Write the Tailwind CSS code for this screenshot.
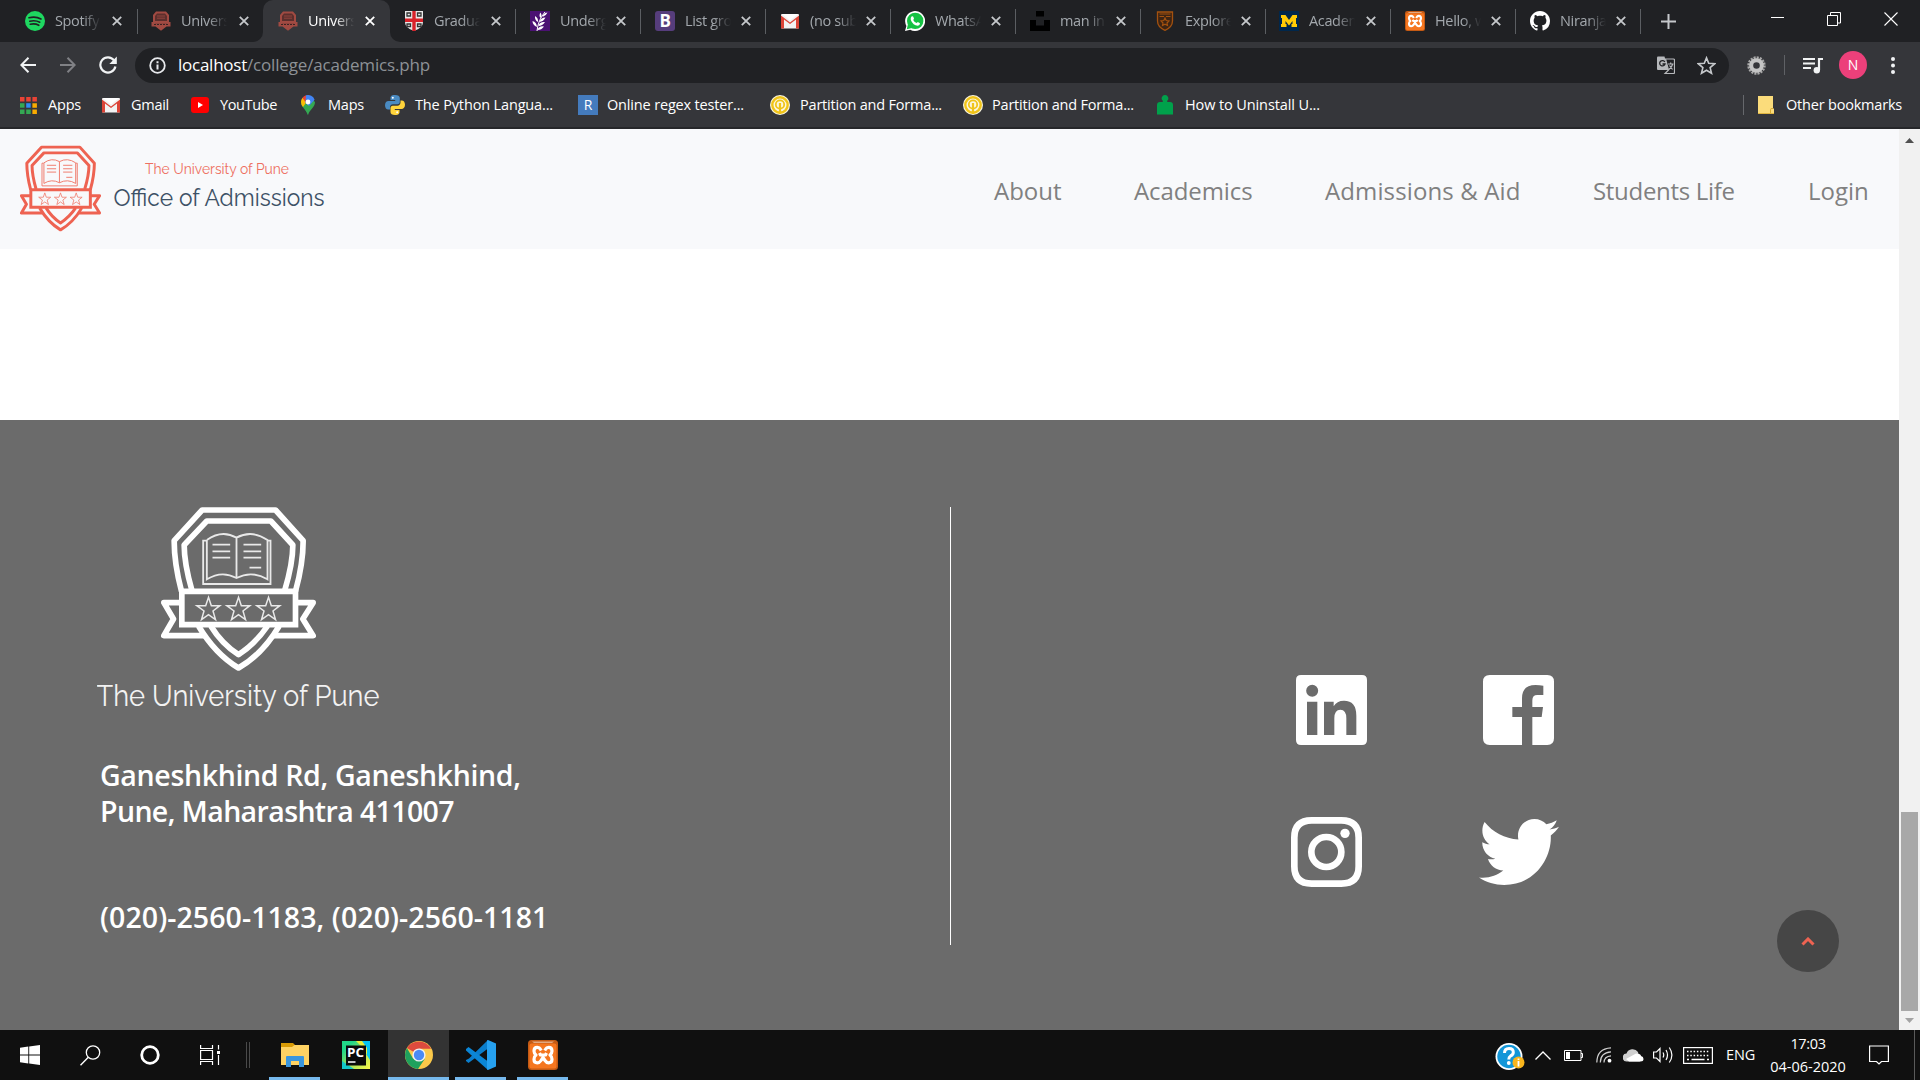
<!DOCTYPE html>
<html lang="en">
<head>
<meta charset="utf-8">
<title>University of Pune</title>
<script src="https://cdn.jsdelivr.net/npm/@tailwindcss/browser@4"></script>
</head>
<body class="w-[1920px] h-[1080px] overflow-hidden bg-white font-['Open_Sans','Noto_Sans',sans-serif] flex flex-col">

<svg class="hidden">
  <symbol id="crest" viewBox="243 51 464 492">
    <g fill="none" stroke="currentColor" stroke-width="17" stroke-linejoin="round">
      <path d="M304 304Q282 220 282 152L366 60H586L669 152Q669 220 646 304"/>
      <path d="M335 300Q312 220 312 165L380 93H572L638 165Q638 220 614 300"/>
      <path d="M305 304H646V404H305Z" stroke-linejoin="miter"/>
      <path d="M300 338H251L280 387L251 437H372M650 338H699L668 387L699 437H580"/>
      <path d="M355 408Q405 492 475 534Q548 492 597 408M392 408Q425 462 475 494Q525 462 562 408"/>
    </g>
    <g fill="none" stroke="currentColor" stroke-width="5.500" opacity=".85">
      <path d="M380 150V268Q425 240 469 264Q515 240 562 268V150Q515 118 469 143Q425 118 380 150M469 143V264M378 152H369V282H571V152H564"/>
      <path d="M397 164H450M397 184H450M397 203H450M490 164H543M490 184H543M490 203H543M508 233H543"/>
    </g>
    <g fill="none" stroke="currentColor" stroke-width="4.500" opacity=".85">
      <path id="st" d="M385 322L393.500 347H419L398.500 363L406 389L385 374L364 389L371.500 363L350 347H376.500Z"/>
      <use href="#st" x="90"/><use href="#st" x="180"/>
    </g>
  </symbol>
  <symbol id="tabcrest" viewBox="0 0 20 20">
    <path d="M5 .5H15L18 4V11H19.500V15.500H15.500L10 19.800L4.500 15.500H.5V11H2V4Z" fill="#a14a42"/>
    <path d="M6 2.500H14L16 5V10H4V5Z" fill="#5c2f2d"/><path d="M6 5H14M6 7.200H14M4 12.500H16" stroke="#91443d"/><path d="M3 13.500H17" stroke="#3a2424" stroke-width="1.200" stroke-dasharray="2 1"/>
  </symbol>
  <symbol id="x" viewBox="0 0 10 10"><path d="M.8.8L9.200 9.200M9.200.8L.8 9.200" stroke="currentColor" stroke-width="1.800"/></symbol>
  <symbol id="gmail" viewBox="0 0 20 16"><rect x="1" y="1" width="18" height="14.500" rx="1" fill="#f2f2f2"/><path d="M1 15.500V2.500L10 9.500L19 2.500V15.500H16V6.500L10 11L4 6.500V15.500Z" fill="#dc4437"/><path d="M2 1H18L10 7.500Z" fill="#fff"/></symbol>
  <symbol id="xampp" viewBox="0 0 30 30"><rect width="30" height="30" rx="3.500" fill="#c45a14"/><rect x="1.500" y="3.500" width="27" height="25" rx="2" fill="#f5761f"/><path d="M4 1.500H26L24 3H6Z" fill="#e2a880"/><path d="M12.300 9Q11.500 7.300 9.300 7.300Q6 7.300 6 11Q6 13.500 8 15Q6 16.500 6 19.200Q6 22.800 9.300 22.800Q11.500 22.800 13 20.500L15 17.500L17 20.500Q18.500 22.800 20.700 22.800Q24 22.800 24 19.200Q24 16.500 22 15Q24 13.500 24 11Q24 7.300 20.700 7.300Q18.500 7.300 17.700 9M11.500 13L12.500 15H17.500L18.500 13M17.700 9L16.800 10.500M12.300 9L13.200 10.500" fill="none" stroke="#fff" stroke-width="3.200" stroke-linejoin="round"/></symbol>
  <symbol id="partition" viewBox="0 0 20 20"><circle cx="10" cy="10" r="10" fill="#fbf6dd"/><circle cx="10" cy="10" r="7.700" fill="none" stroke="#f0c419" stroke-width="2.400"/><circle cx="10" cy="9.500" r="4.200" fill="none" stroke="#f0c419" stroke-width="1.800"/><path d="M10 8V19" stroke="#f0c419" stroke-width="2.200"/></symbol>
</svg>

<!-- Tab strip -->
<div class="h-[42px] shrink-0 bg-[#202124] flex text-[14.5px] tracking-[-0.35px] text-[#a3a8ad]">
  <div class="flex w-[137px] pl-[25px] items-center border-r border-transparent">
    <svg class="size-5 shrink-0" viewBox="0 0 20 20"><circle cx="10" cy="10" r="10" fill="#1ed760"/><path d="M4 6.800Q10.500 5 16 8M4.800 10.200Q10.300 8.800 14.800 11.200M5.300 13.300Q10 12.200 13.800 14.300" fill="none" stroke="#202124" stroke-width="1.600" stroke-linecap="round"/></svg>
    <span class="ml-[10px] w-[46px] overflow-hidden whitespace-nowrap mask-r-from-60%">Spotify</span>
    <svg class="size-[10px] ml-[11px] text-[#c5c8cb]"><use href="#x"/></svg>
  </div>
  <div class="flex w-[126px] pl-[14px] items-center relative">
    <i class="absolute left-0 top-[9px] w-px h-[25px] bg-[#5b5e62]"></i>
    <svg class="size-5 shrink-0"><use href="#tabcrest"/></svg>
    <span class="ml-[10px] w-[46px] overflow-hidden whitespace-nowrap mask-r-from-60%">Universi</span>
    <svg class="size-[10px] ml-[12px] text-[#c5c8cb]"><use href="#x"/></svg>
  </div>
  <div class="flex w-[127px] pl-[15px] items-center bg-[#35363a] rounded-t-[10px] text-white relative">
    <i class="absolute -left-[10px] bottom-0 size-[10px] bg-[#35363a]"><b class="block size-full bg-[#202124] rounded-br-[10px]"></b></i>
    <i class="absolute -right-[10px] bottom-0 size-[10px] bg-[#35363a]"><b class="block size-full bg-[#202124] rounded-bl-[10px]"></b></i>
    <svg class="size-5 shrink-0"><use href="#tabcrest"/></svg>
    <span class="ml-[10px] w-[46px] overflow-hidden whitespace-nowrap mask-r-from-60%">Universi</span>
    <svg class="size-[10px] ml-[11px]"><use href="#x"/></svg>
  </div>
  <div class="flex w-[125px] pl-[14px] items-center">
    <svg class="size-5 shrink-0" viewBox="0 0 20 20"><path d="M1 0H19V11Q19 17 10 20Q1 17 1 11Z" fill="#e9e9e9"/><path d="M3 2H6.500V5H3ZM13.500 2H17V5H13.500ZM3 13H6.500V15.500H3ZM13.500 13H17V15.500H13.500Z" fill="none" stroke="#333" stroke-width="1.300"/><path d="M8.300 0H11.700V20H8.300ZM1 7.500H19V11H1Z" fill="#d8222a"/></svg>
    <span class="ml-[10px] w-[46px] overflow-hidden whitespace-nowrap mask-r-from-60%">Graduat</span>
    <svg class="size-[10px] ml-[11px] text-[#c5c8cb]"><use href="#x"/></svg>
  </div>
  <div class="flex w-[125px] pl-[15px] items-center relative">
    <i class="absolute left-0 top-[9px] w-px h-[25px] bg-[#5b5e62]"></i>
    <svg class="size-5 shrink-0" viewBox="0 0 20 20"><rect width="20" height="20" fill="#4b1173"/><path d="M7 20Q8 9 15 1" fill="none" stroke="#fff" stroke-width="1"/><path d="M8 11Q4.500 9 5 5Q8.500 7 8 11M10.500 7Q8.500 4.500 10.500 1.500Q12.500 4.500 10.500 7M7 16Q2.500 14 2.500 10Q6.500 11 7 16M9.500 11Q13.500 10.500 15.500 6.500Q10.500 6.500 9.500 11M8.300 15Q12.500 15 15 11Q9.500 10.500 8.300 15M7.500 19Q11.500 19 14 15.500Q9 14.500 7.500 19M12.500 6Q16 5 17.500 1.500Q13 2 12.500 6" fill="#fff"/></svg>
    <span class="ml-[10px] w-[46px] overflow-hidden whitespace-nowrap mask-r-from-60%">Undergr</span>
    <svg class="size-[10px] ml-[10px] text-[#c5c8cb]"><use href="#x"/></svg>
  </div>
  <div class="flex w-[125px] pl-[15px] items-center relative">
    <i class="absolute left-0 top-[9px] w-px h-[25px] bg-[#5b5e62]"></i>
    <span class="size-5 shrink-0 rounded-[3px] bg-[#563d7c] text-white font-bold text-[17px] leading-5 text-center">B</span>
    <span class="ml-[10px] w-[46px] overflow-hidden whitespace-nowrap mask-r-from-60%">List grou</span>
    <svg class="size-[10px] ml-[10px] text-[#c5c8cb]"><use href="#x"/></svg>
  </div>
  <div class="flex w-[125px] pl-[15px] items-center relative">
    <i class="absolute left-0 top-[9px] w-px h-[25px] bg-[#5b5e62]"></i>
    <svg class="w-5 h-4 shrink-0"><use href="#gmail"/></svg>
    <span class="ml-[10px] w-[46px] overflow-hidden whitespace-nowrap mask-r-from-60%">(no subj</span>
    <svg class="size-[10px] ml-[10px] text-[#c5c8cb]"><use href="#x"/></svg>
  </div>
  <div class="flex w-[125px] pl-[15px] items-center relative">
    <i class="absolute left-0 top-[9px] w-px h-[25px] bg-[#5b5e62]"></i>
    <svg class="size-5 shrink-0" viewBox="0 0 20 20"><path d="M0 20L1.400 14.900A10 10 0 1 1 5.200 18.700Z" fill="#fff"/><circle cx="10.200" cy="9.900" r="8.200" fill="#15c243"/><path d="M1.800 18.200L3 13L7 17Z" fill="#15c243"/><path d="M6.500 5.500Q8 4.500 8.500 6.200L9 7.800L8.200 9Q9.500 11.300 11.700 12L12.800 11L15 12.200Q15 14.500 12.800 14.700Q8 14.500 5.800 9Q5.300 6.800 6.500 5.500Z" fill="#fff"/></svg>
    <span class="ml-[10px] w-[46px] overflow-hidden whitespace-nowrap mask-r-from-60%">WhatsAp</span>
    <svg class="size-[10px] ml-[10px] text-[#c5c8cb]"><use href="#x"/></svg>
  </div>
  <div class="flex w-[125px] pl-[15px] items-center relative">
    <i class="absolute left-0 top-[9px] w-px h-[25px] bg-[#5b5e62]"></i>
    <svg class="size-5 shrink-0" viewBox="0 0 20 20"><path d="M6 0H14V5.600H6ZM0 9H6V14.500H14V9H20V20H0Z" fill="#000"/></svg>
    <span class="ml-[10px] w-[46px] overflow-hidden whitespace-nowrap mask-r-from-60%">man in b</span>
    <svg class="size-[10px] ml-[10px] text-[#c5c8cb]"><use href="#x"/></svg>
  </div>
  <div class="flex w-[125px] pl-[15px] items-center relative">
    <i class="absolute left-0 top-[9px] w-px h-[25px] bg-[#5b5e62]"></i>
    <svg class="size-5 shrink-0" viewBox="0 0 20 20"><path d="M2.500 1H17.500V10Q17.500 16 10 19.300Q2.500 16 2.500 10Z" fill="#3d2413" stroke="#a3510f" stroke-width="1.300"/><path d="M4.500 3H15.500M4.500 5.500H9M11 5.500H15.500M10 7L11.200 9.500L14 10L12 12L12.500 14.500L10 13.200L7.500 14.500L8 12L6 10L8.800 9.500Z" fill="none" stroke="#a3510f" stroke-width="1.200"/></svg>
    <span class="ml-[10px] w-[46px] overflow-hidden whitespace-nowrap mask-r-from-60%">Explore</span>
    <svg class="size-[10px] ml-[10px] text-[#c5c8cb]"><use href="#x"/></svg>
  </div>
  <div class="flex w-[125px] pl-[14px] items-center relative">
    <i class="absolute left-0 top-[9px] w-px h-[25px] bg-[#5b5e62]"></i>
    <svg class="size-5 shrink-0" viewBox="0 0 20 20"><rect width="20" height="20" fill="#00274c"/><path d="M2 4H6.500L10 9L13.500 4H18V7H17V13H18V16H12.500V13H13.500V10L10 14.500L6.500 10V13H7.500V16H2V13H3V7H2Z" fill="#ffcb05"/></svg>
    <span class="ml-[10px] w-[46px] overflow-hidden whitespace-nowrap mask-r-from-60%">Academi</span>
    <svg class="size-[10px] ml-[11px] text-[#c5c8cb]"><use href="#x"/></svg>
  </div>
  <div class="flex w-[125px] pl-[15px] items-center relative">
    <i class="absolute left-0 top-[9px] w-px h-[25px] bg-[#5b5e62]"></i>
    <svg class="size-5 shrink-0"><use href="#xampp"/></svg>
    <span class="ml-[10px] w-[46px] overflow-hidden whitespace-nowrap mask-r-from-60%">Hello, wo</span>
    <svg class="size-[10px] ml-[10px] text-[#c5c8cb]"><use href="#x"/></svg>
  </div>
  <div class="flex w-[125px] pl-[15px] items-center relative">
    <i class="absolute left-0 top-[9px] w-px h-[25px] bg-[#5b5e62]"></i>
    <svg class="size-5 shrink-0" viewBox="0 0 16 16"><path fill="#fff" d="M8 0C3.580 0 0 3.580 0 8c0 3.540 2.290 6.530 5.470 7.590.4.070.55-.17.55-.38 0-.19-.01-.82-.01-1.490-2.010.37-2.530-.49-2.690-.94-.09-.23-.48-.94-.82-1.130-.28-.15-.68-.52-.01-.53.63-.01 1.080.58 1.230.82.72 1.210 1.870.87 2.330.66.07-.52.28-.87.51-1.070-1.780-.2-3.640-.89-3.640-3.950 0-.87.31-1.590.82-2.150-.08-.2-.36-1.020.08-2.120 0 0 .67-.21 2.200.82.64-.18 1.320-.27 2-.27s1.360.09 2 .27c1.530-1.040 2.200-.82 2.200-.82.44 1.100.16 1.920.08 2.120.51.56.82 1.270.82 2.150 0 3.070-1.870 3.750-3.650 3.950.29.25.54.73.54 1.480 0 1.070-.01 1.930-.01 2.200 0 .21.15.46.55.38A8.010 8.010 0 0 0 16 8c0-4.420-3.580-8-8-8z"/></svg>
    <span class="ml-[10px] w-[46px] overflow-hidden whitespace-nowrap mask-r-from-60%">Niranjan</span>
    <svg class="size-[10px] ml-[10px] text-[#c5c8cb]"><use href="#x"/></svg>
  </div>
  <div class="flex flex-1 pl-[21px] items-center relative">
    <i class="absolute left-0 top-[9px] w-px h-[25px] bg-[#5b5e62]"></i>
    <svg class="size-[15px]" viewBox="0 0 15 15"><path d="M7.500 0V15M0 7.500H15" stroke="#c5c8cb" stroke-width="2"/></svg>
    <svg class="w-[13px] h-[13px] ml-[95px] mb-[7px]" viewBox="0 0 13 13"><path d="M0 6.500H13" stroke="#fff"/></svg>
    <svg class="w-[14px] h-[14px] ml-[43px] mb-[5px]" viewBox="0 0 14 14"><path d="M.5 3.500H10.500V13.500H.5ZM3.500 3V.5H13.500V11H11" stroke="#fff" fill="none"/></svg>
    <svg class="w-[14px] h-[14px] ml-[43px] mb-[5px]" viewBox="0 0 14 14"><path d="M.5.5L13.500 13.500M13.500.5L.5 13.500" stroke="#fff" stroke-width="1.100"/></svg>
  </div>
</div>

<!-- Address bar -->
<div class="h-[46px] shrink-0 bg-[#35363a] flex items-center">
  <svg class="size-4 ml-[20px]" viewBox="0 0 16 16"><path d="M16 8H1.500M8.500 .8L1.300 8L8.500 15.200" fill="none" stroke="#f1f3f4" stroke-width="2"/></svg>
  <svg class="size-4 ml-[24px]" viewBox="0 0 16 16"><path d="M0 8H14.500M7.500 .8L14.700 8L7.500 15.200" fill="none" stroke="#808185" stroke-width="2"/></svg>
  <svg class="size-[18px] ml-[23px]" viewBox="0 0 18 18"><path d="M15 4.300A7.600 7.600 0 1 0 16.400 10.500" fill="none" stroke="#f1f3f4" stroke-width="2.200"/><path d="M17.800 .5V8H10.300Z" fill="#f1f3f4"/></svg>
  <div class="ml-[18px] w-[1594px] h-[35px] rounded-full bg-[#202124] flex items-center text-[17px]">
    <svg class="size-[17px] ml-[14px]" viewBox="0 0 17 17"><circle cx="8.500" cy="8.500" r="7.300" fill="none" stroke="#e8eaed" stroke-width="1.800"/><path d="M8.500 7.500V12.500M8.500 4.300V6.200" stroke="#e8eaed" stroke-width="2"/></svg>
    <span class="ml-[12px] whitespace-nowrap text-white tracking-[-0.247px]">localhost</span><span class="whitespace-nowrap text-[#8d9196] tracking-[-0.168px]">/college/academics.php</span>
    <svg class="w-[18px] h-[18px] ml-auto mr-[22px]" viewBox="0 0 18 18"><path d="M0 1.500Q0 .5 1 .5H7.500L11.500 14H1Q0 14 0 13Z" fill="#b6b8bb"/><path d="M8.500 3H16.500Q17.500 3 17.500 4V16.500Q17.500 17.500 16.500 17.500H8L11.500 14Z" fill="none" stroke="#b6b8bb" stroke-width="1.200"/><path d="M7.800 6A2.700 2.700 0 1 0 8 8H5.500" fill="none" stroke="#202124" stroke-width="1.300"/><path d="M11 8H16.500M13.700 6.500V8M15.700 8Q15 11 12 13.500M12.500 9.500L15.500 13.500" fill="none" stroke="#b6b8bb" stroke-width="1.200"/></svg>
    <svg class="size-[19px] mr-[13px]" viewBox="0 0 20 20"><path d="M10 2L12.300 7.700L18.500 8.200L13.800 12.200L15.300 18.200L10 15L4.700 18.200L6.200 12.200L1.500 8.200L7.700 7.700Z" fill="none" stroke="#c5c8cb" stroke-width="1.700"/></svg>
  </div>
  <svg class="size-[19px] ml-[18px]" viewBox="0 0 19 19"><circle cx="9.500" cy="9.500" r="7.700" fill="none" stroke="#a9a9a9" stroke-width="3" stroke-dasharray="2 1.020"/><circle cx="9.500" cy="9.500" r="5.300" fill="none" stroke="#c4c4c4" stroke-width="4"/></svg>
  <i class="w-px h-5 bg-[#5f6165] ml-[18px]"></i>
  <svg class="w-5 h-[17px] ml-[18px]" viewBox="0 0 20 17"><path d="M0 2H12M0 6.500H12M0 11H8" stroke="#f1f3f4" stroke-width="2"/><path d="M16 13V2H20" fill="none" stroke="#f1f3f4" stroke-width="2.200"/><circle cx="13.800" cy="13.300" r="3.200" fill="#f1f3f4"/></svg>
  <span class="ml-[16px] size-[28px] rounded-full bg-[#ec407a] text-white text-[14px] leading-7 text-center">N</span>
  <svg class="w-[4px] h-[17px] ml-[24px]" viewBox="0 0 4 17"><circle cx="2" cy="2" r="2" fill="#f1f3f4"/><circle cx="2" cy="8.500" r="2" fill="#f1f3f4"/><circle cx="2" cy="15" r="2" fill="#f1f3f4"/></svg>
</div>

<!-- Bookmarks bar -->
<div class="h-[41px] shrink-0 bg-[#35363a] border-b-2 border-[#26272a] flex items-center pb-[5px] text-[14.5px] text-white whitespace-nowrap">
  <svg class="w-[17px] h-[17px] ml-[20px]" viewBox="0 0 17 17"><path d="M0 0h4.500v4.500H0zM6.200 0h4.500v4.500H6.200zM12.400 0h4.500v4.500h-4.500z" fill="#ea4335"/><path d="M0 6.200h4.500v4.500H0z" fill="#34a853"/><path d="M6.200 6.200h4.500v4.500H6.200z" fill="#2f8df5"/><path d="M12.400 6.200h4.500v4.500h-4.500zM12.400 12.400h4.500v4.500h-4.500z" fill="#f9ab00"/><path d="M0 12.400h4.500v4.500H0zM6.200 12.400h4.500v4.500H6.200z" fill="#34a853"/></svg>
  <span class="ml-[11px] w-[33px] tracking-[-0.2px]">Apps</span>
  <svg class="w-5 h-4 ml-[20px]"><use href="#gmail"/></svg>
  <span class="ml-[10px] w-[38px] tracking-[-0.27px]">Gmail</span>
  <svg class="w-[18px] h-[16px] ml-[22px]" viewBox="0 0 18 16"><rect width="18" height="16" rx="3" fill="#f00"/><path d="M7 5L12 8L7 11Z" fill="#fff"/></svg>
  <span class="ml-[11px] w-[57px] tracking-[-0.37px]">YouTube</span>
  <svg class="w-[14px] h-5 ml-[24px]" viewBox="0 0 14 20"><path d="M7 20C6 15 0 12.500 0 7L4 3L10 10C8.500 13 7.500 15 7 20Z" fill="#34a853"/><path d="M14 7C14 12.500 8 15 7 20L4.500 15L11 4Z" fill="#34a853"/><path d="M0 7A7 7 0 0 1 1.500 2.700L6 6.500L2 12Q0 9.500 0 7" fill="#fbbc04"/><path d="M1.500 2.700A7 7 0 0 1 5 .3L8 4L5 8Z" fill="#ea4335"/><path d="M5 .3A7 7 0 0 1 13.600 4.700L8 11L4.500 8Z" fill="#4285f4"/><circle cx="7" cy="7" r="2.400" fill="#fff"/></svg>
  <span class="ml-[13px] w-[36px] tracking-[-0.22px]">Maps</span>
  <svg class="w-5 h-5 ml-[21px]" viewBox="0 0 20 20"><path d="M10 0C6 0 5.500 1.500 5.500 3V5H10.200V6H3.500C1.500 6 0 7.500 0 10.200C0 13 1.500 14.500 3.200 14.500H5V12C5 10.500 6.500 9.300 8 9.300H12.500C13.700 9.300 14.800 8.300 14.800 7V3C14.800 1 13 0 10 0Z" fill="#4a8bc2"/><path d="M10 20C14 20 14.500 18.500 14.500 17V15H9.800V14H16.500C18.500 14 20 12.500 20 9.800C20 7 18.500 5.500 16.800 5.500H15.500V7.500C15.500 9.500 14 10.700 12.500 10.700H7.700C6.300 10.700 5.500 11.700 5.500 13V17C5.500 19 7 20 10 20Z" fill="#ffd43b"/><circle cx="7.800" cy="2.700" r="1" fill="#fff"/><circle cx="12.200" cy="17.300" r="1" fill="#fff"/></svg>
  <span class="ml-[10px] w-[138px] tracking-[-0.15px]">The Python Langua...</span>
  <span class="ml-[25px] w-5 h-5 bg-[#447bbd] text-[14px] leading-5 text-center">R</span>
  <span class="ml-[9px] w-[137px] tracking-[-0.165px]">Online regex tester...</span>
  <svg class="size-5 ml-[26px]"><use href="#partition"/></svg>
  <span class="ml-[10px] w-[142px] tracking-[-0.2px]">Partition and Forma...</span>
  <svg class="size-5 ml-[21px]"><use href="#partition"/></svg>
  <span class="ml-[9px] w-[142px] tracking-[-0.2px]">Partition and Forma...</span>
  <svg class="w-4 h-5 ml-[23px]" viewBox="0 0 16 20"><path d="M8 0A3.300 3.300 0 0 1 10.200 5.800V7H13Q16 7 16 10V19.500H0V10Q0 7 3 7H5.800V5.800A3.300 3.300 0 0 1 8 0Z" fill="#00a14b"/></svg>
  <span class="ml-[12px] w-[135px] tracking-[-0.11px]">How to Uninstall U...</span>
  <i class="w-px h-5 bg-[#66686c] ml-auto"></i>
  <svg class="w-4 h-[18px] ml-[14px]" viewBox="0 0 16 18"><path d="M0 0H15V12.500H16V17.500H0Z" fill="#fbdc7b"/><path d="M12.500 17.500V13.500Q12.500 12.500 14 12.500H15" fill="none" stroke="#d8ab32"/><path d="M0 17.500H16" stroke="#e0b540"/></svg>
  <span class="ml-[12px] mr-[18px] w-[116px] tracking-[-0.2px]">Other bookmarks</span>
</div>

<!-- Viewport -->
<div class="flex h-[901px] shrink-0">
  <div class="w-[1899px] relative">
    <nav class="h-[120px] bg-[#f8f9fb] flex items-center">
      <svg class="w-[330px] h-[120px]" viewBox="0 0 330 120" font-family="Raleway, Lato, sans-serif">
        <svg x="20" y="16" width="81" height="87" color="#ee6352" preserveAspectRatio="none"><use href="#crest" width="81" height="87"/></svg>
        <text x="145" y="45" font-size="15.500" textLength="144" lengthAdjust="spacingAndGlyphs" fill="#ee6f60">The University of Pune</text>
        <text x="113.500" y="77" font-size="23.500" textLength="211" lengthAdjust="spacingAndGlyphs" fill="#3d5166">Office of Admissions</text>
      </svg>
      <div class="ml-auto flex text-[24px] leading-[36px] text-[#808080] pr-[30px] gap-[73px] pt-[3px] whitespace-nowrap">
        <span class="w-[67px]">About</span>
        <span class="w-[118px] tracking-[-0.1px]">Academics</span>
        <span class="w-[195px] tracking-[0.12px]">Admissions &amp; Aid</span>
        <span class="w-[142px] tracking-[-0.3px]">Students Life</span>
        <span class="w-[61px]">Login</span>
      </div>
    </nav>
    <div class="h-[171px] bg-white"></div>
    <footer class="h-[610px] bg-[#6b6b6b] flex pt-[87px] text-white">
      <div class="w-[950px] h-[438px] pl-[97px]">
        <svg class="w-[290px] h-[215px]" viewBox="0 0 290 215" font-family="Raleway, Lato, sans-serif">
          <use href="#crest" x="64" y="0" width="155" height="164"/>
          <text x="-.5" y="199" font-size="29" textLength="283" lengthAdjust="spacingAndGlyphs" fill="#f2f2f2">The University of Pune</text>
        </svg>
        <p class="mt-[35px] pl-[3px] text-[28.5px] leading-[36px] font-semibold whitespace-nowrap"><span class="tracking-[-0.34px]">Ganeshkhind Rd, Ganeshkhind,</span><br><span class="tracking-[-0.62px]">Pune, Maharashtra 411007</span></p>
        <p class="mt-[70px] pl-[3px] text-[28.5px] leading-[36px] font-semibold whitespace-nowrap tracking-[0.06px]">(020)-2560-1183, (020)-2560-1181</p>
      </div>
      <div class="w-px h-[438px] bg-white"></div>
      <div class="pl-[340px] pt-[168px] flex flex-col">
        <div class="flex pl-[5px] gap-[116px]">
          <svg class="w-[71px] h-[70px]" viewBox="0 0 213 210"><path fill="#fff" fill-rule="evenodd" d="M15 0H198Q213 0 213 15V195Q213 210 198 210H15Q0 210 0 195V15Q0 0 15 0ZM48.500 29.500A18 18 0 1 0 48.500 65.500A18 18 0 1 0 48.500 29.500ZM33 80V180H64V80ZM84 80V180H115V130Q115 104 133 104Q151 104 151 130V180H181V122Q181 77 144 77Q122 77 113 94V80Z"/></svg>
          <svg class="w-[71px] h-[70px]" viewBox="0 0 213 210"><path fill="#fff" d="M20 0H193Q213 0 213 20V190Q213 210 193 210H148V126H176L180 96H148V76Q148 60 163 60H181V32Q170 30 158 30Q117 30 117 70V96H88V126H117V210H20Q0 210 0 190V20Q0 0 20 0Z"/></svg>
        </div>
        <div class="flex pt-[72px] gap-[117px] items-center">
          <svg class="w-[71px] h-[70px]" viewBox="0 0 213 210"><g fill="none" stroke="#fff" stroke-width="20"><path d="M62 10H151Q203 10 203 62V148Q203 200 151 200H62Q10 200 10 148V62Q10 10 62 10Z"/><circle cx="106" cy="105" r="45"/></g><circle cx="162" cy="49" r="14" fill="#fff"/></svg>
          <svg class="w-[80px] h-[66px]" viewBox="0 48 512 416" preserveAspectRatio="none"><path fill="#fff" d="M459.370 151.716c.325 4.548.325 9.097.325 13.645 0 138.720-105.583 298.558-298.558 298.558-59.452 0-114.680-17.219-161.137-47.106 8.447.974 16.568 1.299 25.340 1.299 49.055 0 94.213-16.568 130.274-44.832-46.132-.975-84.792-31.188-98.112-72.772 6.498.974 12.995 1.624 19.818 1.624 9.421 0 18.843-1.300 27.614-3.573-48.081-9.747-84.143-51.980-84.143-102.985v-1.299c13.969 7.797 30.214 12.670 47.431 13.319-28.264-18.843-46.781-51.005-46.781-87.391 0-19.492 5.197-37.360 14.294-52.954 51.655 63.675 129.300 105.258 216.365 109.807-1.624-7.797-2.599-15.918-2.599-24.040 0-57.828 46.782-104.934 104.934-104.934 30.213 0 57.502 12.670 76.670 33.137 23.715-4.548 46.456-13.320 66.599-25.340-7.798 24.366-24.366 44.833-46.132 57.827 21.117-2.273 41.584-8.122 60.426-16.243-14.292 20.791-32.161 39.308-52.628 54.253z"/></svg>
        </div>
      </div>
    </footer>
    <button class="absolute left-[1777px] top-[781px] size-[62px] rounded-full bg-[#464646] grid place-items-center">
      <svg class="w-[14px] h-[9px]" viewBox="0 0 14 9"><path d="M1.500 7.500L7 2L12.500 7.500" fill="none" stroke="#ee6352" stroke-width="3"/></svg>
    </button>
  </div>
  <!-- Scrollbar -->
  <div class="w-[21px] bg-[#f1f1f1] flex flex-col items-center">
    <svg class="w-[9px] h-[5px] mt-[9px]" viewBox="0 0 9 5"><path d="M0 5L4.500 0L9 5Z" fill="#505050"/></svg>
    <div class="mt-[669px] w-[17px] h-[199px] bg-[#a8a8a8]"></div>
    <svg class="w-[9px] h-[5px] mt-[7px]" viewBox="0 0 9 5"><path d="M0 0L4.500 5L9 0Z" fill="#a3a3a3"/></svg>
  </div>
</div>

<!-- Taskbar -->
<div class="h-[50px] shrink-0 bg-[#101010] flex items-center text-white">
  <svg class="size-5 ml-[20px]" viewBox="0 0 20 20"><path d="M0 2.800L8.300 1.600V9.500H0ZM9.200 1.500L20 0V9.500H9.200ZM0 10.400H8.300V18.400L0 17.200ZM9.200 10.400H20V20L9.200 18.500Z" fill="#fff"/></svg>
  <svg class="w-[21px] h-[21px] ml-[40px]" viewBox="0 0 21 21"><circle cx="13" cy="7.500" r="6.700" fill="none" stroke="#fff" stroke-width="1.300"/><path d="M8.300 12.300L.5 20.300" stroke="#fff" stroke-width="1.400"/></svg>
  <svg class="size-5 ml-[39px]" viewBox="0 0 20 20"><circle cx="10" cy="10" r="8.300" fill="none" stroke="#fff" stroke-width="2.800"/></svg>
  <svg class="w-[21px] h-5 ml-[40px]" viewBox="0 0 21 20"><path d="M.6 0V3.500H12.500V0M.6 5.500H12.500V14.500H.6ZM.6 20V16.500H12.500V20M18.500 0V4.500M18.500 10V20" fill="none" stroke="#fff" stroke-width="1.200"/><path d="M17 6H20V9H17Z" fill="#fff"/></svg>
  <i class="w-px h-[26px] bg-[#4a4a4a] ml-[25px]"></i><i class="w-px h-[26px] bg-[#4a4a4a] ml-[2px]"></i>
  <div class="ml-[19px] w-[51px] h-full flex items-center justify-center pt-[2px] border-b-[3px] border-[#76b9ed]">
    <svg class="w-7 h-6" viewBox="0 0 28 24"><path d="M0 0H12L14 2H27V10H0Z" fill="#d99b05"/><path d="M0 4H11L13.500 2H28V22H0Z" fill="#ffd363"/><path d="M5 24V14Q5 13 6 13H22Q23 13 23 14V24H18V18H10V24Z" fill="#3a96dd"/></svg>
  </div>
  <div class="ml-[15px] w-[41px] h-full flex items-center justify-center">
    <svg class="w-7 h-7" viewBox="0 0 28 28"><defs><linearGradient id="pg" x1="0" y1="0" x2="1" y2="1"><stop offset=".2" stop-color="#21d789"/><stop offset=".55" stop-color="#9fe35a"/><stop offset="1" stop-color="#fcf84a"/></linearGradient></defs><rect width="28" height="28" fill="url(#pg)"/><path d="M15 0H28V19L21 8Z" fill="#07c3f2"/><path d="M14 0H20L25 7V14L20 6Z" fill="#e9f03c"/><path d="M0 20L12 28H0Z" fill="#12c6c9"/><rect x="4" y="4.500" width="20" height="20" fill="#0a0a0a"/><text x="5" y="15.500" font-size="12" font-weight="700" textLength="17" lengthAdjust="spacingAndGlyphs" fill="#fff">PC</text><path d="M6 21H13.500" stroke="#fff" stroke-width="1.500"/></svg>
  </div>
  <div class="ml-[12px] w-[61px] h-full flex items-center justify-center pt-[3px] bg-[#333] border-b-[3px] border-[#76b9ed]">
    <svg class="w-7 h-7" viewBox="0 0 28 28"><circle cx="14" cy="14" r="14" fill="#fbc94a"/><path d="M14 14L1.900 7A14 14 0 0 1 26.100 7.700H14Z" fill="#dd4b3e"/><path d="M1.900 7A14 14 0 0 0 13 28L20 17.500L8 17.500Z" fill="#1fa15d"/><circle cx="14" cy="14" r="6.600" fill="#f1f1f1"/><circle cx="14" cy="14" r="5.200" fill="#4a8af4"/></svg>
  </div>
  <div class="ml-[6px] w-[51px] h-full flex items-center justify-center pt-[3px] border-b-[3px] border-[#76b9ed]">
    <svg class="w-[30px] h-[30px]" viewBox="0 0 30 30"><path d="M22 0L3 18.500L0 20V21L2.500 23L22 8.500Z" fill="#0a7dcb"/><path d="M22 30L0 10.500V9L2.500 7L22 21.500Z" fill="#0b86d6"/><path d="M22 0L30 3.500V26.500L22 30Q21 30 21 29V1Q21 0 22 0Z" fill="#26a1f0"/></svg>
  </div>
  <div class="ml-[11px] w-[51px] h-full flex items-center justify-center pt-[3px] border-b-[3px] border-[#76b9ed]">
    <svg class="w-[30px] h-[30px]"><use href="#xampp"/></svg>
  </div>

  <svg class="w-[30px] h-[28px] ml-auto mt-[3px]" viewBox="0 0 30 28"><circle cx="14" cy="13.500" r="13.500" fill="#fff"/><circle cx="14" cy="13.500" r="11.700" fill="#1296d8"/><path d="M9.500 10Q9.500 5.500 14 5.500Q18.300 5.500 18.300 9.300Q18.300 11.800 15.500 13Q13.800 14 13.800 16.500" fill="none" stroke="#fff" stroke-width="3"/><circle cx="13.800" cy="20" r="1.900" fill="#fff"/><circle cx="23.500" cy="19.500" r="6" fill="#f9b51c"/><path d="M23.500 18V23.500M23.500 15.500V17" stroke="#fff" stroke-width="1.800"/></svg>
  <svg class="w-[16px] h-[9px] ml-[10px]" viewBox="0 0 16 9"><path d="M.5 8.500L8 1L15.500 8.500" fill="none" stroke="#fff" stroke-width="1.300"/></svg>
  <svg class="w-[19px] h-[11px] ml-[13px]" viewBox="0 0 19 11"><path d="M.5.500H17V10.500H.5ZM17 3.500H18.500V7.500H17" fill="none" stroke="#fff"/><path d="M2 2H6V9H2Z" fill="#fff"/></svg>
  <svg class="w-4 h-4 ml-[13px]" viewBox="0 0 16 16"><g fill="none" stroke="#d0d0d0" stroke-width="1.200"><path d="M.8 15.500Q1 1.500 15 .8M4.300 15.500Q4.500 5.500 15 4.800M8 15.500Q8.200 9.300 15 8.800"/></g><circle cx="13.500" cy="13.700" r="1.900" fill="#fff"/></svg>
  <svg class="w-[21px] h-[14px] ml-[11px]" viewBox="0 0 21 14"><path d="M4 13.500A4 4 0 0 1 3.500 5.500A6.500 6.500 0 0 1 15 4L17 13.500Z" fill="#cfcfcf"/><path d="M6 13.500L3 11L13 5.500Q18 5.500 18 8Q20.500 8.500 20.500 11Q20.500 13.500 17.500 13.500Z" fill="#fff"/></svg>
  <svg class="w-[21px] h-[18px] ml-[9px]" viewBox="0 0 21 18"><path d="M.6 6H3.500L7 2.500V15.500L3.500 12H.6ZM10 6.500Q11.500 9 10 11.500M13 4Q16 9 13 14M16.300 1.500Q21.500 9 16.300 16.500" fill="none" stroke="#fff" stroke-width="1.200"/></svg>
  <svg class="w-[30px] h-[17px] ml-[9px]" viewBox="0 0 30 17"><rect x=".6" y=".6" width="28.800" height="15.800" fill="none" stroke="#fff" stroke-width="1.200"/><path d="M4 4.500H27M4 8.500H27" stroke="#fff" stroke-width="1.500" stroke-dasharray="1.500 1.800"/><path d="M4 12.500H6M8.500 12.500H21.500M24 12.500H26" stroke="#fff" stroke-width="1.300"/></svg>
  <span class="ml-[13px] w-[31px] text-[14.5px] tracking-[-0.1px]">ENG</span>
  <div class="ml-[12px] w-[78px] flex flex-col items-center text-[14.5px] leading-[23px]"><span class="tracking-[-0.35px]">17:03</span><span>04-06-2020</span></div>
  <svg class="w-5 h-5 ml-[22px]" viewBox="0 0 20 20"><path d="M.6 1H19.400V16.500H12.500L10 19L7.500 16.500H.6Z" fill="none" stroke="#fff" stroke-width="1.200"/></svg>
  <i class="w-px h-full bg-[#5a5a5a] ml-[25px] mr-[5px]"></i>
</div>
</body>
</html>
